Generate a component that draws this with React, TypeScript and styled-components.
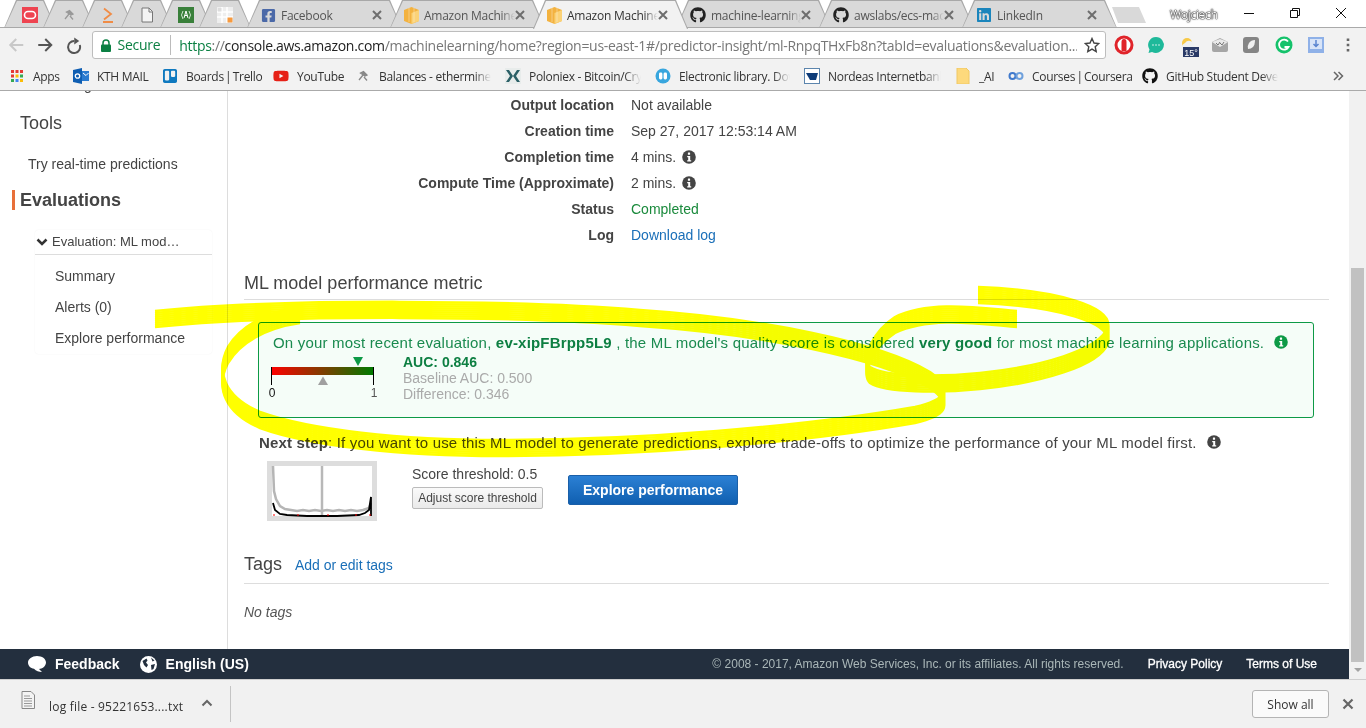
import React from "react";
import styled, { createGlobalStyle } from "styled-components";
import { FaGithub, FaYoutube, FaFacebookSquare, FaLinkedin, FaTrello } from "react-icons/fa";

const Global = createGlobalStyle`
  html, body { margin: 0; padding: 0; height: 100%; overflow: hidden; background: #fff; }
  body { font-family: "Liberation Sans", Arial, sans-serif; font-size: 14px; color: #444; }
  * { box-sizing: border-box; }
`;

const UI = `"Open Sans", "Noto Sans", sans-serif`;

const Page = styled.div`
  position: relative;
  width: 1366px;
  height: 728px;
  display: flex;
  flex-direction: column;
  overflow: hidden;
`;

/* ---------- tab strip ---------- */
const TabStrip = styled.div`
  height: 28px;
  flex: none;
  display: flex;
  align-items: stretch;
  padding-left: 4px;
  background: #fff;
  position: relative;
  box-shadow: inset 0 -1px 0 #aaa;
`;
const Tab = styled.div<{ $active?: boolean; $pinned?: boolean; $gap?: number }>`
  position: relative;
  flex: none;
  width: ${p => (p.$pinned ? 52 : 155)}px;
  margin-left: ${p => p.$gap ?? -12}px;
  height: ${p => (p.$active ? 29 : 28)}px;
  z-index: ${p => (p.$active ? 3 : 1)};
  background: #a8a8a8;
  clip-path: polygon(0 100%, 12px 0, calc(100% - 12px) 0, 100% 100%);
  display: flex;
  align-items: center;
  justify-content: ${p => (p.$pinned ? "center" : "flex-start")};
  padding: ${p => (p.$pinned ? "1px 0 0" : p.$active ? "1px 15px 0 14px" : "2px 15px 0 14px")};
  font: 12px ${UI};
  letter-spacing: -0.25px;
  color: #444;
  &::before {
    content: "";
    position: absolute;
    inset: 1px 1px ${p => (p.$active ? 0 : 1)}px 1px;
    background: ${p => (p.$active ? "#f2f2f2" : "#d9d9d9")};
    clip-path: polygon(0 100%, 12px 0, calc(100% - 12px) 0, 100% 100%);
  }
  & > * { position: relative; }
`;
const TabTitle = styled.span<{ $active?: boolean }>`
  flex: 1;
  min-width: 0;
  margin-left: 5px;
  white-space: nowrap;
  overflow: hidden;
  color: ${p => (p.$active ? "#333" : "#555")};
  -webkit-mask-image: linear-gradient(to right, #000 85%, transparent);
  mask-image: linear-gradient(to right, #000 85%, transparent);
`;
const TabClose = styled.svg`
  flex: none;
  width: 10px;
  height: 10px;
  margin-right: 5px;
`;
const NewTab = styled.div`
  flex: none;
  width: 34px;
  height: 16px;
  margin: 7px 0 0 -5px;
  background: #d9d9d9;
  clip-path: polygon(0 0, 27px 0, 100% 100%, 6px 100%);
`;
const WindowArea = styled.div`
  margin-left: auto;
  display: flex;
  align-items: center;
  height: 27px;
  padding-right: 2px;
`;
const UserName = styled.span`
  font: 12px ${UI};
  letter-spacing: -0.3px;
  color: #fff;
  width: 56px;
  padding-top: 1px;
  text-shadow: 0 0 1px #000, 0 0 1px #000, 0 0 2px #333;
`;
const WinButton = styled.svg`
  width: 46px;
  height: 12px;
  flex: none;
  margin-bottom: 2px;
`;

/* ---------- toolbar ---------- */
const Toolbar = styled.div`
  height: 34px;
  flex: none;
  background: #f2f2f2;
  display: flex;
  align-items: center;
  padding-left: 6px;
`;
const NavIcon = styled.svg`
  width: 28.5px;
  height: 18px;
  flex: none;
`;
const AddressBar = styled.div`
  width: 1014px;
  height: 28px;
  flex: none;
  background: #fff;
  border: 1px solid #bdbdbd;
  border-radius: 3px;
  display: flex;
  align-items: center;
  padding-left: 8px;
  font: 14px ${UI};
  letter-spacing: -0.28px;
  white-space: nowrap;
`;
const SecureLabel = styled.span`
  color: #0b8043;
  margin-left: 7px;
  padding-right: 10px;
  border-right: 1px solid #bbb;
  line-height: 20px;
`;
const Url = styled.span`
  margin-left: 8px;
  width: 898px;
  overflow: hidden;
  color: #777;
  letter-spacing: -0.3px;
  b { font-weight: 400; color: #222; }
  i { font-style: normal; color: #0b8043; }
`;
const Star = styled.svg`
  width: 16px;
  height: 16px;
  margin-left: 7px;
  flex: none;
`;
const Extensions = styled.div`
  display: flex;
  align-items: center;
  margin-left: 8px;
`;
const ExtIcon = styled.svg`
  width: 32px;
  height: 20px;
  flex: none;
  overflow: visible;
`;

/* ---------- bookmarks ---------- */
const Bookmarks = styled.div`
  height: 29px;
  flex: none;
  background: #f2f2f2;
  border-bottom: 1px solid #aaa;
  display: flex;
  align-items: center;
  padding-left: 9px;
  font: 12px ${UI};
  letter-spacing: -0.3px;
  color: #333;
  white-space: nowrap;
  position: relative;
`;
const Bookmark = styled.div<{ $w: number; $fade?: boolean; $tight?: boolean }>`
  flex: none;
  width: ${p => p.$w}px;
  display: flex;
  align-items: center;
  gap: 8px;
  overflow: hidden;
  word-spacing: ${p => (p.$tight ? -1.5 : 0)}px;
  & > span {
    ${p => p.$fade ? `
      -webkit-mask-image: linear-gradient(to right, #000 85%, transparent);
      mask-image: linear-gradient(to right, #000 85%, transparent);
      overflow: hidden;
      flex: none;
      width: ${p.$w - 38}px;
    ` : ""}
  }
`;
const BmIcon = styled.svg`
  width: 16px;
  height: 16px;
  flex: none;
`;
const More = styled.svg`
  width: 12px;
  height: 12px;
  position: absolute;
  left: 1332px;
  top: 8px;
`;

/* ---------- page content ---------- */
const Viewport = styled.div`
  flex: 1;
  min-height: 0;
  display: flex;
`;
const PageColumn = styled.div`
  width: 1349px;
  flex: none;
  display: flex;
  flex-direction: column;
`;
const ContentRow = styled.div`
  flex: 1;
  min-height: 0;
  display: flex;
`;
const Scrollbar = styled.div`
  width: 17px;
  flex: none;
  background: #f1f1f1;
  display: flex;
  flex-direction: column;
  align-items: center;
`;
const ScrollThumb = styled.div`
  width: 13px;
  height: 394px;
  margin-top: 177px;
  background: #c1c1c1;
`;
const ScrollArrow = styled.div`
  margin-top: 6px;
  width: 0;
  height: 0;
  border-left: 4px solid transparent;
  border-right: 4px solid transparent;
  border-top: 4px solid #a3a3a3;
`;

const Sidebar = styled.aside`
  width: 228px;
  flex: none;
  border-right: 1px solid #ddd;
  overflow: hidden;
  padding-top: 0;
`;
const ClippedLink = styled.div`
  margin: -14px 0 0 28px;
  height: 16px;
  line-height: 16px;
  color: #444;
`;
const SideTitle = styled.div`
  margin: 19px 0 0 20px;
  font-size: 18px;
  line-height: 22px;
  color: #444;
`;
const SideLink = styled.div`
  margin: 21px 0 0 28px;
  line-height: 18px;
  color: #444;
`;
const SideActive = styled.div`
  margin: 17px 0 0 12px;
  border-left: 3px solid #e8703a;
  padding-left: 5px;
  font-size: 18px;
  font-weight: 700;
  line-height: 20px;
  color: #444;
`;
const SideCard = styled.div`
  margin: 20px 15px 0 35px;
  height: 124px;
  border-radius: 4px;
  box-shadow: 0 0 2px rgba(0, 0, 0, 0.06);
`;
const SideCardHead = styled.div`
  height: 25px;
  border-bottom: 1px solid #ddd;
  display: flex;
  align-items: center;
  gap: 4px;
  padding: 0 0 0 1px;
  font-size: 13px;
  line-height: 18px;
  color: #444;
`;
const SideItems = styled.div`
  padding: 12px 0 0 20px;
  display: flex;
  flex-direction: column;
  gap: 13px;
  line-height: 18px;
  color: #444;
`;

const Main = styled.main`
  flex: 1;
  min-width: 0;
  padding: 1px 20px 0 16px;
  overflow: hidden;
`;
const DetailRow = styled.div`
  display: grid;
  grid-template-columns: 370px 1fr;
  column-gap: 17px;
  height: 26px;
  align-items: center;
`;
const DetailLabel = styled.div`
  text-align: right;
  font-weight: 700;
  color: #444;
`;
const DetailValue = styled.div<{ $tone?: "green" | "link" }>`
  display: flex;
  align-items: center;
  gap: 6px;
  color: ${p => (p.$tone === "green" ? "#1a8a3c" : p.$tone === "link" ? "#1a6fb8" : "#444")};
`;
const SectionHead = styled.div<{ $mt: number; $h: number }>`
  margin-top: ${p => p.$mt}px;
  height: ${p => p.$h}px;
  border-bottom: 1px solid #ddd;
  display: flex;
  align-items: center;
  gap: 13px;
  padding-bottom: 3px;
  font-size: 18px;
  color: #444;
`;
const HeadLink = styled.a`
  font-size: 14px;
  color: #1a6fb8;
  text-decoration: none;
  letter-spacing: -0.02px;
`;
const Alert = styled.div`
  margin: 22px 15px 0 14px;
  height: 96px;
  border: 1px solid #0d9a46;
  border-radius: 3px;
  background: #f5fdf8;
  padding: 10px 14px 0;
`;
const AlertLine = styled.div`
  display: flex;
  align-items: center;
  height: 18px;
  font-size: 15px;
  letter-spacing: 0.19px;
  color: #1a8a4f;
  white-space: pre;
  b { font-weight: 700; color: #0d7f42; }
`;
const InfoIcon = styled.svg`
  width: 14px;
  height: 14px;
  flex: none;
`;
const GaugeRow = styled.div`
  display: flex;
  margin-top: 1px;
  height: 48px;
`;
const Gauge = styled.svg`
  width: 130px;
  height: 48px;
  margin-left: -3px;
  flex: none;
  overflow: visible;
  font-family: "Liberation Sans", sans-serif;
`;
const GaugeStats = styled.div`
  margin-left: 3px;
  padding-top: 2px;
  line-height: 16px;
  color: #aaa;
  b { display: block; font-weight: 700; color: #0d7f42; }
`;
const NextStep = styled.div`
  margin: 14px 0 0 15px;
  height: 20px;
  display: flex;
  align-items: center;
  font-size: 15px;
  letter-spacing: 0.17px;
  color: #444;
  white-space: pre;
  b { font-weight: 700; }
`;
const ActionRow = styled.div`
  display: flex;
  margin: 9px 0 0 23px;
  height: 60px;
`;
const Thumb = styled.svg`
  width: 110px;
  height: 60px;
  flex: none;
`;
const Threshold = styled.div`
  margin-left: 35px;
  width: 156px;
  flex: none;
  padding-top: 5px;
  line-height: 16px;
`;
const SmallButton = styled.button`
  display: block;
  margin-top: 5px;
  width: 131px;
  height: 22px;
  padding: 0;
  border: 1px solid #bbb;
  border-radius: 2px;
  background: linear-gradient(#fafafa, #eaeaea);
  font: 12px "Liberation Sans", sans-serif;
  color: #444;
`;
const PrimaryButton = styled.button`
  margin-top: 14px;
  width: 170px;
  height: 30px;
  padding: 0;
  border: 1px solid #1a5fa8;
  border-radius: 2px;
  background: linear-gradient(#2b80d4, #105fb0);
  font: 700 14px "Liberation Sans", sans-serif;
  color: #fff;
`;
const NoTags = styled.div`
  margin-top: 19px;
  font-style: italic;
  line-height: 18px;
  color: #555;
`;

/* ---------- footer ---------- */
const Footer = styled.footer`
  height: 30px;
  flex: none;
  background: #232f3e;
  display: flex;
  align-items: center;
  padding: 0 32px 0 28px;
  color: #fff;
`;
const FooterItem = styled.div`
  display: flex;
  align-items: center;
  gap: 9px;
  margin-right: 20px;
  font-weight: 700;
  font-size: 14px;
`;
const Copyright = styled.div`
  margin-left: auto;
  font-size: 12px;
  color: #aab7b8;
`;
const FooterLink = styled.a`
  margin-left: 24px;
  font-size: 12px;
  font-weight: 400;
  color: #fff;
  -webkit-text-stroke: 0.3px #fff;
`;

/* ---------- downloads ---------- */
const DownloadBar = styled.div`
  height: 49px;
  flex: none;
  background: #f1f1f1;
  border-top: 1px solid #cfcfcf;
  display: flex;
  align-items: center;
  padding-left: 21px;
  font: 12px ${UI};
  color: #333;
`;
const FileIcon = styled.svg`
  width: 14px;
  height: 18px;
  margin: -8px 14px 0 0;
  flex: none;
`;
const FileName = styled.span`
  width: 152px;
  flex: none;
  margin-top: 4px;
  letter-spacing: 0.2px;
`;
const Chevron = styled.svg`
  width: 12px;
  height: 8px;
  flex: none;
  margin-top: -3px;
`;
const Divider = styled.div`
  width: 1px;
  height: 36px;
  margin-left: 17px;
  background: #c4c4c4;
`;
const ShowAll = styled.button`
  margin-left: auto;
  width: 77px;
  height: 28px;
  padding: 0;
  border: 1px solid #b4b4b4;
  border-radius: 3px;
  background: #fafafa;
  font: 12px ${UI};
  color: #333;
`;
const CloseBar = styled.svg`
  width: 12px;
  height: 12px;
  margin: 0 12px 0 13px;
  flex: none;
`;

/* ---------- highlighter scribble ---------- */
const Scribble = styled.svg`
  position: absolute;
  left: 0;
  top: 0;
  width: 1366px;
  height: 728px;
  pointer-events: none;
  mix-blend-mode: multiply;
`;

const Info = ({ c = "#444" }: { c?: string }) => (
  <InfoIcon viewBox="0 0 14 14">
    <circle cx="7" cy="7" r="6.8" fill={c} />
    <rect x="5.9" y="2.6" width="2.2" height="2.2" rx=".5" fill="#fff" />
    <path d="M5.2 6h3v4.2h1v1.2H5.2v-1.2h1V7.2h-1z" fill="#fff" />
  </InfoIcon>
);

const X = () => (
  <TabClose viewBox="0 0 10 10">
    <path d="M1 1l8 8M9 1l-8 8" stroke="#6e6e6e" strokeWidth="2" />
  </TabClose>
);

const Box = () => (
  <svg width="15" height="17" viewBox="0 0 15 17" style={{ flex: "none" }}>
    <path d="M7.5 0L15 3v11l-7.5 3L0 14V3z" fill="#f3b23f" />
    <path d="M7.5 6L15 3v11l-7.5 3z" fill="#fbd277" />
    <path d="M5 1v14M10 1v14" stroke="#fff" strokeOpacity=".35" />
  </svg>
);

const ico = { width: 16, height: 16, flex: "none" as const };

const tabs = [
  { t: "Facebook", i: <FaFacebookSquare size={15} color="#4b69a8" style={{ flex: "none" }} />, g: -4 },
  { t: "Amazon Machine Learning", i: <Box /> },
  { t: "Amazon Machine Learning", i: <Box />, a: true },
  { t: "machine-learning", i: <FaGithub size={16} color="#222" style={{ flex: "none" }} /> },
  { t: "awslabs/ecs-machine", i: <FaGithub size={16} color="#222" style={{ flex: "none" }} /> },
  { t: "LinkedIn", i: <FaLinkedin size={16} color="#1a85bc" style={{ flex: "none" }} /> },
];

const pinned = [
  <svg key="o" style={ico} viewBox="0 0 16 16"><rect width="16" height="16" fill="#ee4450" /><rect x="2.5" y="4.5" width="11" height="7" rx="3.5" fill="none" stroke="#fff" strokeWidth="1.6" /></svg>,
  <svg key="m" style={ico} viewBox="0 0 16 16"><path d="M4 12l4-5M5.5 5l3-1.5L12 7l-2 1zM9 9l3 3.5" stroke="#999" strokeWidth="1.3" fill="#999" /></svg>,
  <svg key="s" style={ico} viewBox="0 0 16 16"><path d="M4 1.5l7 5.5-7 5.5" fill="none" stroke="#f08c46" strokeWidth="1.8" /><path d="M3 15h10" stroke="#f08c46" strokeWidth="1.8" /></svg>,
  <svg key="f" style={ico} viewBox="0 0 16 16"><path d="M3 1h7l3.5 3.5V15H3z" fill="#f4f4f4" stroke="#777" /><path d="M10 1v4h3.5" fill="none" stroke="#777" /></svg>,
  <svg key="g" style={ico} viewBox="0 0 16 16"><rect width="16" height="16" fill="#39803a" /><path d="M5 4L3.500 8 5 12M11 4l1.5 4L11 12" fill="none" stroke="#cfe5cf" /><path d="M6 11l2-7 2 7M6.800 8.500h2.400" fill="none" stroke="#fff" /></svg>,
  <svg key="w" style={ico} viewBox="0 0 16 16"><rect width="16" height="16" fill="#eee" /><path d="M0 5h16M0 10h16M5 0v16M10 0v16" stroke="#fff" strokeWidth="1.5" /><rect x="10.5" y="10.5" width="5" height="5" fill="#f79a3e" /><rect x="1" y="1" width="3.5" height="3.5" fill="#ddd" /></svg>,
];

const Row = ({ label, children, tone }: { label: string; children: React.ReactNode; tone?: "green" | "link" }) => (
  <DetailRow>
    <DetailLabel>{label}</DetailLabel>
    <DetailValue $tone={tone}>{children}</DetailValue>
  </DetailRow>
);

const Brush = ({ d }: { d: string }) => (
  <>
    {Array.from({ length: 9 }, (_, i) => (
      <path key={i} d={d} transform={`translate(0 ${i * 2 - 8})`} fill="none" stroke="#ffff00" strokeWidth="2.5" strokeLinecap="butt" />
    ))}
  </>
);

export default function App() {
  return (
    <Page>
      <Global />
      <TabStrip>
        {pinned.map((p, i) => (
          <Tab key={i} $pinned $gap={i === 0 ? 0 : -13}>{p}</Tab>
        ))}
        {tabs.map((t, i) => (
          <Tab key={i} $active={t.a} $gap={t.g}>
            {t.i}
            <TabTitle $active={t.a}>{t.t}</TabTitle>
            <X />
          </Tab>
        ))}
        <NewTab />
        <WindowArea>
          <UserName>Wojciech</UserName>
          <WinButton viewBox="0 0 46 12"><path d="M18 6.5h10" stroke="#111" /></WinButton>
          <WinButton viewBox="0 0 46 12"><path d="M18.5 3.5h7v7h-7zM20.5 3.5v-2h7v7h-2" fill="none" stroke="#111" /></WinButton>
          <WinButton viewBox="0 0 46 12"><path d="M18 1l10 10M28 1L18 11" stroke="#111" /></WinButton>
        </WindowArea>
      </TabStrip>

      <Toolbar>
        <NavIcon viewBox="0 0 28 18"><path d="M17 9H4M10 3L4 9l6 6" fill="none" stroke="#c8c8c8" strokeWidth="2" /></NavIcon>
        <NavIcon viewBox="0 0 28 18"><path d="M3 9h13M10 3l6 6-6 6" fill="none" stroke="#555" strokeWidth="2" /></NavIcon>
        <NavIcon viewBox="3 0 28 18"><path d="M14 5a6 6 0 1 0 5.5 4" fill="none" stroke="#555" strokeWidth="2" /><path d="M14 1.5v7l5-3.5z" fill="#555" /></NavIcon>
        <AddressBar>
          <svg width="10" height="13" viewBox="0 0 10 13" style={{ flex: "none" }}><path d="M2 6V4a3 3 0 0 1 6 0v2" fill="none" stroke="#0b8043" strokeWidth="1.5" /><rect y="5.5" width="10" height="7.5" rx="1" fill="#0b8043" /></svg>
          <SecureLabel>Secure</SecureLabel>
          <Url><i>https</i>://<b>console.aws.amazon.com</b>/machinelearning/home?region=us-east-1#/predictor-insight/ml-RnpqTHxFb8n?tabId=evaluations&amp;evaluation...</Url>
          <Star viewBox="0 0 16 16"><path d="M8 1.5l2 4.5 4.8.5-3.6 3.2 1 4.8L8 12.1 3.800 14.500l1-4.800L1.200 6.500 6 6z" fill="none" stroke="#444" strokeWidth="1.4" /></Star>
        </AddressBar>
        <Extensions>
          <ExtIcon viewBox="0 0 32 20"><circle cx="10" cy="10" r="8" fill="#fff" stroke="#e0242a" strokeWidth="3" /><path d="M7.5 16V7q0-3 2.500-3t2.500 3v9z" fill="#e0242a" /></ExtIcon>
          <ExtIcon viewBox="0 0 32 20"><path d="M10 2a8 8 0 1 1-4 15l-3.5 1 1-3.500A8 8 0 0 1 10 2z" fill="#1fb99a" /><path d="M6.500 10h1M9.500 10h1M12.500 10h1" stroke="#fff" strokeWidth="1.3" /></ExtIcon>
          <ExtIcon viewBox="0 0 32 20"><circle cx="9" cy="8" r="5" fill="#f7c948" /><path d="M6 15a4 4 0 0 1 1-7 5 5 0 0 1 9 2 3 3 0 0 1 0 5z" fill="#eef0f2" /><rect x="5" y="12" width="16" height="10" fill="#2a3a66" /><text x="13" y="20.5" fontSize="9" fill="#fff" textAnchor="middle" fontFamily="Liberation Sans">15°</text></ExtIcon>
          <ExtIcon viewBox="0 0 32 20"><path d="M2 7l8-4 8 4v8q0 2-2 2H4q-2 0-2-2z" fill="#a6a6a6" /><path d="M2 7l8 5 8-5-8-3z" fill="#e9e9e9" /><path d="M6 8l2 2 2-3M10 8l2 2 2-3" stroke="#777" fill="none" /></ExtIcon>
          <ExtIcon viewBox="0 0 32 20"><rect x="1" y="2" width="16" height="16" rx="3" fill="#858585" /><path d="M6 14q-1-3 1-6t6-3q0 5-2 7t-5 2z" fill="#f0f0f0" /></ExtIcon>
          <ExtIcon viewBox="0 0 32 20"><circle cx="10" cy="10" r="8.5" fill="#15c26b" /><path d="M14 6.500a5 5 0 1 0 .5 5.500H10.500" fill="none" stroke="#fff" strokeWidth="1.8" /></ExtIcon>
          <ExtIcon viewBox="0 0 32 20"><rect x="2" y="2" width="16" height="16" fill="#8fb1e8" /><rect x="4" y="4" width="12" height="10" fill="#d8e4f8" /><path d="M10 5v6M7.500 9l2.500 2.500L12.500 9" stroke="#5a84cf" fill="none" strokeWidth="1.5" /></ExtIcon>
          <ExtIcon viewBox="0 0 32 20"><path d="M10 3.5v2.500M10 8.800v2.500M10 14v2.500" stroke="#666" strokeWidth="2.6" /></ExtIcon>
        </Extensions>
      </Toolbar>

      <Bookmarks>
        <Bookmark $w={64}>
          <BmIcon viewBox="0 0 16 16">
            {[0, 1, 2].map(r => [0, 1, 2].map(c => (
              <rect key={`${r}${c}`} x={2 + c * 4.5} y={2 + r * 4.5} width="3" height="3" fill={[["#e53935", "#e53935", "#e53935"], ["#e53935", "#fbbc05", "#34a853"], ["#34a853", "#4285f4", "#fbbc05"]][r][c]} />
            )))}
          </BmIcon>
          <span>Apps</span>
        </Bookmark>
        <Bookmark $w={89}>
          <BmIcon viewBox="0 0 16 16"><rect x="5" y="3" width="11" height="10" fill="#2a7bd0" /><path d="M0 2l9-2v16l-9-2z" fill="#0f5eb2" /><circle cx="4.5" cy="8" r="2.2" fill="none" stroke="#fff" strokeWidth="1.3" /><path d="M10 5l3 2.500L15.500 5" stroke="#fff" fill="none" /></BmIcon>
          <span>KTH MAIL</span>
        </Bookmark>
        <Bookmark $w={111} $tight>
          <FaTrello size={16} color="#0f79bf" style={{ flex: "none" }} />
          <span>Boards | Trello</span>
        </Bookmark>
        <Bookmark $w={82}>
          <FaYoutube size={16} color="#e62117" style={{ flex: "none" }} />
          <span>YouTube</span>
        </Bookmark>
        <Bookmark $w={150} $fade>
          <BmIcon viewBox="0 0 16 16"><path d="M4 12l4-5M5.500 5l3-1.500L12 7l-2 1zM9 9l3 3.500" stroke="#888" strokeWidth="1.3" fill="#888" /></BmIcon>
          <span>Balances - ethermine.org</span>
        </Bookmark>
        <Bookmark $w={150} $fade>
          <BmIcon viewBox="0 0 16 16"><rect width="16" height="16" fill="#e8eceb" /><path d="M1 2h3l4 6-4 6H1l4-6zM15 2h-3L8 8l4 6h3l-4-6z" fill="#2b5f66" /></BmIcon>
          <span>Poloniex - Bitcoin/Crypto</span>
        </Bookmark>
        <Bookmark $w={149} $fade>
          <BmIcon viewBox="0 0 16 16"><circle cx="8" cy="8" r="7.5" fill="#38a6de" /><rect x="4" y="4.5" width="3.4" height="7" rx="1.4" fill="#fff" /><rect x="8.6" y="4.5" width="3.4" height="7" rx="1.4" fill="#fff" /></BmIcon>
          <span>Electronic library. Download</span>
        </Bookmark>
        <Bookmark $w={151} $fade>
          <BmIcon viewBox="0 0 16 16"><rect x=".5" y=".5" width="15" height="15" fill="#fff" stroke="#5c85ad" /><path d="M2 5h12l-2 7H6z" fill="#0d3b78" /></BmIcon>
          <span>Nordeas Internetbank</span>
        </Bookmark>
        <Bookmark $w={53}>
          <BmIcon viewBox="0 0 16 16"><path d="M2 0h9l3 3v13H2z" fill="#fdd97c" stroke="#f0c864" /></BmIcon>
          <span>_AI</span>
        </Bookmark>
        <Bookmark $w={134} $tight>
          <BmIcon viewBox="0 0 16 16"><circle cx="4.5" cy="8" r="3" fill="none" stroke="#3f79cc" strokeWidth="2" /><circle cx="11.5" cy="8" r="3" fill="none" stroke="#6ea0dc" strokeWidth="2" /></BmIcon>
          <span>Courses | Coursera</span>
        </Bookmark>
        <Bookmark $w={150} $fade>
          <FaGithub size={16} color="#111" style={{ flex: "none" }} />
          <span>GitHub Student Developer</span>
        </Bookmark>
        <More viewBox="0 0 12 12"><path d="M2 2l4 4-4 4M6.500 2l4 4-4 4" fill="none" stroke="#666" strokeWidth="1.5" /></More>
      </Bookmarks>

      <Viewport>
        <PageColumn>
          <ContentRow>
            <Sidebar>
              <ClippedLink>Retraining</ClippedLink>
              <SideTitle>Tools</SideTitle>
              <SideLink>Try real-time predictions</SideLink>
              <SideActive>Evaluations</SideActive>
              <SideCard>
                <SideCardHead>
                  <svg width="12" height="8" viewBox="0 0 12 8" style={{ flex: "none" }}><path d="M1.500 1.500L6 6l4.500-4.500" fill="none" stroke="#333" strokeWidth="2.5" /></svg>
                  Evaluation: ML mod…
                </SideCardHead>
                <SideItems>
                  <div>Summary</div>
                  <div>Alerts (0)</div>
                  <div>Explore performance</div>
                </SideItems>
              </SideCard>
            </Sidebar>
            <Main>
              <Row label="Output location">Not available</Row>
              <Row label="Creation time">Sep 27, 2017 12:53:14 AM</Row>
              <Row label="Completion time">4 mins. <Info /></Row>
              <Row label="Compute Time (Approximate)">2 mins. <Info /></Row>
              <Row label="Status" tone="green">Completed</Row>
              <Row label="Log" tone="link">Download log</Row>

              <SectionHead $mt={22} $h={30}>ML model performance metric</SectionHead>

              <Alert>
                <AlertLine>
                  On your most recent evaluation, <b>ev-xipFBrpp5L9</b> , the ML model's quality score is considered <b>very good</b> for most machine learning applications.
                  <span style={{ width: 10 }} />
                  <Info c="#0d9a46" />
                </AlertLine>
                <GaugeRow>
                  <Gauge viewBox="0 0 130 48">
                    <defs>
                      <linearGradient id="auc" x1="0" x2="1" y1="0" y2="0">
                        <stop offset="0" stopColor="#ff0000" />
                        <stop offset="1" stopColor="#007a00" />
                      </linearGradient>
                    </defs>
                    <rect x="1" y="15" width="102" height="8" fill="url(#auc)" />
                    <path d="M1.500 15v18M103.500 15v18" stroke="#000" />
                    <path d="M83 5h10l-5 9z" fill="#0d9a46" />
                    <path d="M48 33h10l-5-8.500z" fill="#a0a0a0" />
                    <text x="2" y="45" fontSize="12" fill="#111" textAnchor="middle">0</text>
                    <text x="104" y="45" fontSize="12" fill="#555" textAnchor="middle">1</text>
                  </Gauge>
                  <GaugeStats>
                    <b>AUC: 0.846</b>
                    Baseline AUC: 0.500<br />
                    Difference: 0.346
                  </GaugeStats>
                </GaugeRow>
              </Alert>

              <NextStep>
                <b>Next step</b>: If you want to use this ML model to generate predictions, explore trade-offs to optimize the performance of your ML model first.
                <span style={{ width: 10 }} />
                <Info />
              </NextStep>

              <ActionRow>
                <Thumb viewBox="0 0 110 60">
                  <rect width="110" height="60" fill="#ddd" />
                  <rect x="5" y="5" width="100" height="50" fill="#fff" />
                  <path d="M6 5L7 30 9 38 13 45 18 48 24 49 30 50 36 49 42 50 48 49 54 50 60 49 66 50 72 49 78 50 84 49 90 50 96 49 102 47 104 42" fill="none" stroke="#b5b5b5" strokeWidth="2.5" />
                  <path d="M55 5v50" stroke="#b8b8b8" strokeWidth="2.5" />
                  <path d="M6 42L8 49 13 53 20 54 40 55 70 55 92 54 98 52 102 49 104 36V55" fill="none" stroke="#000" strokeWidth="1.8" />
                  <path d="M6 54h2M30 54h2M60 54h2M88 54h2M102 54h2" stroke="#f00" />
                </Thumb>
                <Threshold>
                  Score threshold: 0.5
                  <SmallButton>Adjust score threshold</SmallButton>
                </Threshold>
                <PrimaryButton>Explore performance</PrimaryButton>
              </ActionRow>

              <SectionHead $mt={28} $h={35}>
                Tags
                <HeadLink>Add or edit tags</HeadLink>
              </SectionHead>
              <NoTags>No tags</NoTags>
            </Main>
          </ContentRow>
          <Footer>
            <FooterItem>
              <svg width="18" height="16" viewBox="0 0 18 16"><path d="M9 0c5 0 9 2.800 9 6.500S14 13 11 13l3 3c-3 0-6-1-8-3.200C2.500 12 0 10 0 6.500S4 0 9 0z" fill="#fff" /></svg>
              Feedback
            </FooterItem>
            <FooterItem>
              <svg width="17" height="17" viewBox="0 0 17 17"><circle cx="8.5" cy="8.5" r="8.5" fill="#fff" /><path d="M2.500 5l4-2.500 1 2-1.500 2L8 9l-1.500 2.500L4 9zM11 1.500l3.500 3-2 1zM11 9l4-1-1.500 5-2 1z" fill="#232f3e" /></svg>
              English (US)
            </FooterItem>
            <Copyright>© 2008 - 2017, Amazon Web Services, Inc. or its affiliates. All rights reserved.</Copyright>
            <FooterLink>Privacy Policy</FooterLink>
            <FooterLink>Terms of Use</FooterLink>
          </Footer>
        </PageColumn>
        <Scrollbar>
          <ScrollThumb />
          <ScrollArrow />
        </Scrollbar>
      </Viewport>

      <DownloadBar>
        <FileIcon viewBox="0 0 14 18"><path d="M1 .5h9l3.500 3.500v13.500H1z" fill="#f4f4f4" stroke="#888" /><path d="M3 5h6M3 7.500h8M3 10h8M3 12.500h8M3 15h8" stroke="#999" /></FileIcon>
        <FileName>log file - 95221653....txt</FileName>
        <Chevron viewBox="0 0 12 8"><path d="M1.500 6.500L6 2l4.500 4.500" fill="none" stroke="#666" strokeWidth="2" /></Chevron>
        <Divider />
        <ShowAll>Show all</ShowAll>
        <CloseBar viewBox="0 0 12 12"><path d="M1.500 1.500l9 9M10.500 1.500l-9 9" stroke="#666" strokeWidth="2.2" /></CloseBar>
      </DownloadBar>

      <Scribble viewBox="0 0 1366 728">
        <Brush d="M155 319 C280 306 520 308 640 318 C760 326 880 350 930 380 C955 398 945 408 915 415 C800 435 640 448 500 448 C400 448 310 438 260 420 C225 405 215 380 228 355 C240 335 265 320 300 315" />
        <Brush d="M1017 319 C980 316 930 308 895 325 C875 338 860 365 870 375 C885 385 940 385 980 381 C1040 375 1100 358 1108 335 C1112 315 1060 298 978 295" />
      </Scribble>
    </Page>
  );
}
